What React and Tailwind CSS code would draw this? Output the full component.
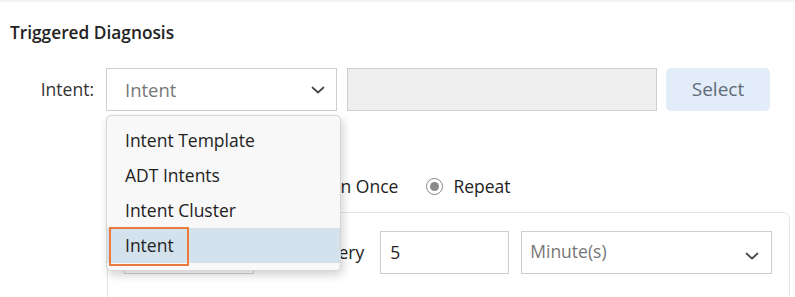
const font = { fontFamily: '"Open Sans", "Noto Sans", sans-serif' };

function Chevron({ className }) {
  return (
    <svg className={className} width="14" height="8" viewBox="0 0 14 8" fill="none">
      <path d="M1.5 1.5 7 6.5l5.5-5" stroke="#444" strokeWidth="1.7" strokeLinecap="round" strokeLinejoin="round" />
    </svg>
  );
}

export default function App() {
  const opciones = ['Intent Template', 'ADT Intents', 'Intent Cluster', 'Intent'];

  return (
    <div className="relative w-[795px] h-[297px] overflow-hidden bg-white text-[#333]" style={font}>
      <div className="h-[2px] bg-[#f3f3f3]" />

      <h2 className="mt-[19px] pl-[10px] text-[17.3px] leading-[24px] font-semibold text-[#222]">Triggered Diagnosis</h2>

      {/* fila Intent */}
      <div className="mt-[23px] flex items-center">
        <span className="w-[106px] pr-[12px] text-right text-[17.5px]">Intent:</span>
        <div className="relative">
          <div className="flex h-[43px] w-[231px] items-center justify-between border border-[#cfcfcf] bg-white pl-[18px] pr-[11px]">
            <span className="text-[18.5px] text-[#777]">Intent</span>
            <Chevron />
          </div>

          {/* menu desplegado */}
          <div className="absolute left-0 top-[47px] z-20 w-[235px] rounded-[5px] border border-[#d6d6d6] bg-[#f8f8f8] pt-[7px] pb-[7px] shadow-[2px_4px_10px_rgba(0,0,0,0.18)]">
            {opciones.map((op, i) => (
              <div
                key={op}
                className={`relative flex h-[35px] items-center pl-[18px] text-[17.5px] text-[#222] ${i === 3 ? 'bg-[#d3e2ec]' : ''}`}
              >
                {i === 3 && <div className="absolute left-[2px] top-[-1px] h-[39px] w-[80px] border-2 border-[#ec7a3c]" />}
                {op}
              </div>
            ))}
          </div>
        </div>
        <div className="ml-[10px] h-[43px] w-[310px] border border-[#cfcfcf] bg-[#eeeeee]" />
        <button className="ml-[9px] h-[43px] w-[104px] rounded-[5px] bg-[#e3ecf9] text-[19px] text-[#5f6b78]">Select</button>
      </div>

      {/* tipo de ejecucion */}
      <div className="mt-[63px] flex h-[24px] items-center pl-[293px] text-[17.5px] text-[#222]">
        <span className="h-[17px] w-[17px] rounded-full border-[1.5px] border-[#999] bg-white" />
        <span className="ml-[9px]">Run Once</span>
        <span className="ml-[28px] flex h-[17px] w-[17px] items-center justify-center rounded-full border-[1.5px] border-[#8a8a8a] bg-white">
          <span className="h-[9px] w-[9px] rounded-full bg-[#8a8a8a]" />
        </span>
        <span className="ml-[10px]">Repeat</span>
      </div>

      {/* panel repetir */}
      <div className="ml-[107px] mt-[14px] h-[120px] w-[683px] rounded-[7px] border border-[#e6e6e6] pl-[16px] pt-[18px]">
        <div className="flex items-center">
          <div className="h-[43px] w-[130px] border border-[#cfcfcf]" />
          <span className="ml-[66px] text-[17.5px] text-[#222]">Every</span>
          <div className="ml-[16px] flex h-[43px] w-[129px] items-center border border-[#cfcfcf] pl-[9px] text-[17.5px] text-[#222]">5</div>
          <div className="ml-[12px] flex h-[43px] w-[251px] items-start justify-between border border-[#cfcfcf] pl-[8px] pr-[12px] pt-[6px]">
            <span className="text-[17.5px] text-[#777]">Minute(s)</span>
            <Chevron className="mt-[14px]" />
          </div>
        </div>
      </div>
    </div>
  );
}
